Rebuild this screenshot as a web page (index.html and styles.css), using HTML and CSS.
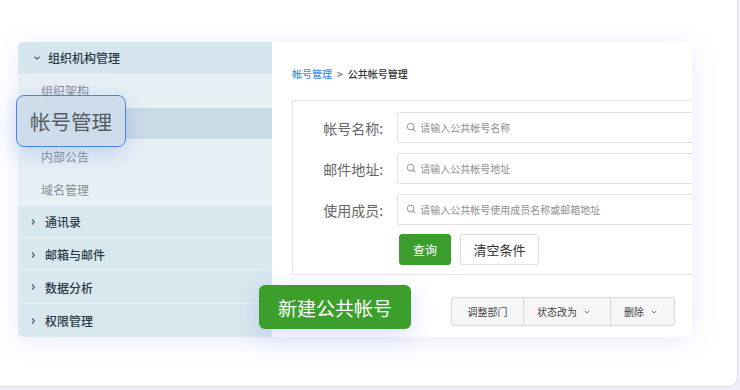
FILE: index.html
```html
<!DOCTYPE html>
<html lang="zh">
<head>
<meta charset="utf-8">
<link rel="stylesheet" href="styles.css">
</head>
<body>
<div class="frame">
  <div class="panel">
    <aside class="sidebar">
      <div class="group open"><svg class="chev" viewBox="0 0 8 8"><path d="M1.5 2.8 L4 5.2 L6.5 2.8" /></svg><span>组织机构管理</span></div>
      <div class="sub">组织架构</div>
      <div class="sub active"></div>
      <div class="sub">内部公告</div>
      <div class="sub">域名管理</div>
      <div class="group"><svg class="chev" viewBox="0 0 8 8"><path d="M3 1.5 L5.3 4 L3 6.5" /></svg><span>通讯录</span></div>
      <div class="group"><svg class="chev" viewBox="0 0 8 8"><path d="M3 1.5 L5.3 4 L3 6.5" /></svg><span>邮箱与邮件</span></div>
      <div class="group"><svg class="chev" viewBox="0 0 8 8"><path d="M3 1.5 L5.3 4 L3 6.5" /></svg><span>数据分析</span></div>
      <div class="group last"><svg class="chev" viewBox="0 0 8 8"><path d="M3 1.5 L5.3 4 L3 6.5" /></svg><span>权限管理</span></div>
    </aside>
    <main class="content">
      <div class="crumb"><a>帐号管理</a><span class="sep">&gt;</span><span>公共帐号管理</span></div>
      <div class="filter">
        <div class="row"><label>帐号名称:</label><div class="input"><svg class="search" viewBox="0 0 12 12"><circle cx="5" cy="5" r="3.6"/><path d="M7.6 7.6 L10.2 10.2"/></svg>请输入公共帐号名称</div></div>
        <div class="row"><label>邮件地址:</label><div class="input"><svg class="search" viewBox="0 0 12 12"><circle cx="5" cy="5" r="3.6"/><path d="M7.6 7.6 L10.2 10.2"/></svg>请输入公共帐号地址</div></div>
        <div class="row"><label>使用成员:</label><div class="input"><svg class="search" viewBox="0 0 12 12"><circle cx="5" cy="5" r="3.6"/><path d="M7.6 7.6 L10.2 10.2"/></svg>请输入公共帐号使用成员名称或邮箱地址</div></div>
        <div class="row actions"><button class="btn primary">查询</button><button class="btn plain">清空条件</button></div>
      </div>
      <div class="toolbar">
        <div class="btngroup">
          <span class="gbtn">调整部门</span>
          <span class="gbtn">状态改为<svg class="dchev" viewBox="0 0 8 8"><path d="M1.8 3 L4 5 L6.2 3"/></svg></span>
          <span class="gbtn">删除<svg class="dchev" viewBox="0 0 8 8"><path d="M1.8 3 L4 5 L6.2 3"/></svg></span>
        </div>
      </div>
    </main>
    <div class="zoom-item">帐号管理</div>
    <div class="zoom-new">新建公共帐号</div>
  </div>
</div>
</body>
</html>
```
FILE: styles.css
```css
* { box-sizing: border-box; }
html, body { margin: 0; padding: 0; }
body {
  width: 740px;
  height: 390px;
  overflow: hidden;
  background: #eeeef8;
  font-family: "Noto Sans CJK SC", "Noto Sans", sans-serif;
}
.frame {
  width: 738px;
  height: 387px;
  background: #fff;
  border-right: 1px solid #e2e2ee;
  border-bottom: 1px solid #e2e2ee;
  border-bottom-right-radius: 10px;
  padding: 42px 0 0 18px;
}
.panel {
  position: relative;
  width: 674px;
  height: 295px;
  display: flex;
  border-radius: 6px;
  box-shadow: 0 4px 28px rgba(110, 125, 220, 0.15);
}
.sidebar {
  width: 254px;
  flex: none;
  display: flex;
  flex-direction: column;
  background: #d9e7ee;
  border-radius: 6px 0 0 6px;
  overflow: hidden;
}
.group, .sub {
  height: 32.8px;
  display: flex;
  align-items: center;
  border-bottom: 1px solid #e9f1f5;
  font-size: 12px;
}
.group {
  padding-left: 11px;
  color: #2a3a48;
  font-weight: 500;
  background: #d9e7ee;
}
.group.open { background: #d6e6ee; }
.group.last { border-bottom: none; }
.chev {
  width: 8px;
  height: 8px;
  margin-right: 8px;
  fill: none;
  stroke: #55626e;
  stroke-width: 1.2;
}
.group.open .chev { margin-left: 4px; margin-right: 7px; }
.sub {
  padding-left: 23px;
  color: #858d95;
  background: #e7f0f4;
}
.sub.active { background: #c9dbe6; }
.content {
  flex: 1;
  background: #fff;
  overflow: hidden;
  padding: 23px 0 0 20px;
  border-radius: 0 6px 6px 0;
}
.crumb {
  font-size: 10px;
  color: #333;
  height: 18px;
  line-height: 18px;
  font-weight: 500;
}
.crumb a { color: #3d8fe6; }
.crumb .sep { margin: 0 5px; color: #555; }
.filter {
  margin-top: 17px;
  width: 440px;
  border: 1px solid #e6e6e6;
  padding: 11px 0 9px 0;
  display: flex;
  flex-direction: column;
  gap: 10px;
}
.row {
  display: flex;
  align-items: center;
  height: 31px;
}
.row label {
  width: 92px;
  text-align: right;
  font-size: 14px;
  color: #666;
  margin-right: 14px;
}
.input {
  width: 340px;
  height: 31px;
  border: 1px solid #e3e3e3;
  border-radius: 2px;
  display: flex;
  align-items: center;
  padding-left: 8px;
  font-size: 10px;
  color: #8f8f8f;
}
.search {
  width: 11px;
  height: 11px;
  margin-right: 3px;
  fill: none;
  stroke: #9a9a9a;
  stroke-width: 1.1;
}
.actions {
  padding-left: 106px;
  gap: 9px;
  margin-top: -1px;
}
.btn {
  height: 31px;
  border-radius: 3px;
  font-family: inherit;
  font-size: 13px;
  cursor: pointer;
}
.btn.primary {
  width: 52px;
  background: #3b9d2c;
  border: 1px solid #3b9d2c;
  color: #fff;
  font-size: 12px;
}
.btn.plain {
  width: 79px;
  background: #fff;
  border: 1px solid #dcdcdc;
  color: #333;
}
.toolbar {
  margin-top: 22px;
  padding-left: 159px;
  display: flex;
}
.btngroup {
  display: flex;
  height: 29px;
  border: 1px solid #d8d8d8;
  border-radius: 3px;
  background: #f6f6f6;
}
.gbtn {
  display: flex;
  align-items: center;
  padding: 0 13px;
  font-size: 10px;
  color: #444;
  border-left: 1px solid #d8d8d8;
}
.gbtn:first-child { border-left: none; width: 71px; justify-content: center; padding: 0; }
.gbtn:nth-child(2) { width: 87px; }
.gbtn:nth-child(3) { width: 64px; }
.dchev {
  width: 8px;
  height: 8px;
  margin-left: 6px;
  fill: none;
  stroke: #777;
  stroke-width: 1;
}
.zoom-item {
  position: absolute;
  left: -2px;
  top: 53px;
  width: 110px;
  height: 52px;
  border: 1px solid #4a84e6;
  border-radius: 8px;
  background: rgba(204, 220, 233, 0.93);
  box-shadow: 0 6px 22px rgba(90, 120, 240, 0.28);
  font-size: 20.5px;
  color: #555b62;
  display: flex;
  align-items: center;
  padding-left: 13px;
}
.zoom-new {
  position: absolute;
  left: 241px;
  top: 243px;
  width: 152px;
  height: 44px;
  border-radius: 6px;
  background: #3c9e2b;
  color: #fff;
  font-size: 19px;
  display: flex;
  align-items: center;
  justify-content: center;
  box-shadow: 0 6px 22px rgba(90, 120, 240, 0.25);
}
```
